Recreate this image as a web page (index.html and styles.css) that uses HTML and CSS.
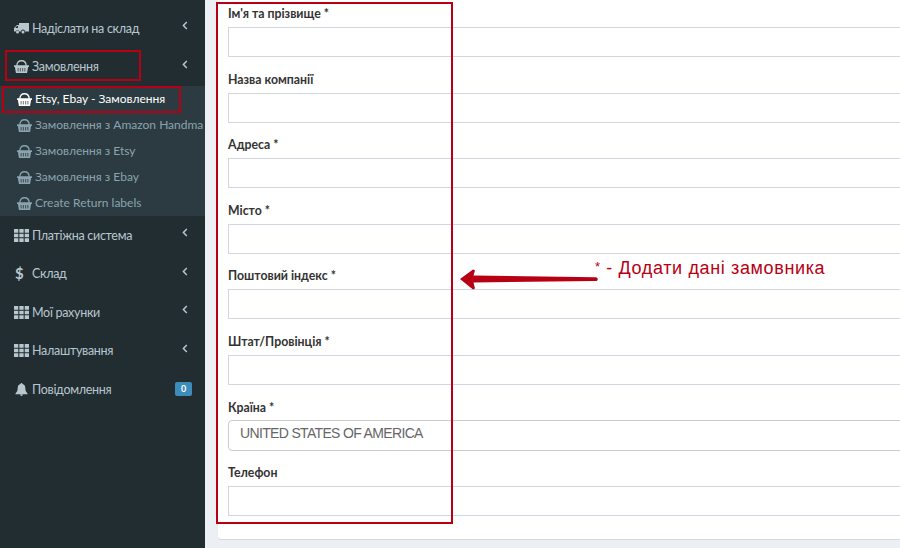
FILE: index.html
```html
<!DOCTYPE html>
<html lang="uk">
<head>
<meta charset="utf-8">
<title>Замовлення</title>
<link rel="stylesheet" href="styles.css">
</head>
<body>
<svg class="defs" width="0" height="0" aria-hidden="true">
  <symbol id="basket" viewBox="0 0 16 14">
    <path d="M3 6.5 C3 2.500 5 .8 8 .8 C11 .8 13 2.500 13 6.500" fill="none" stroke="currentColor" stroke-width="1.400"/>
    <path fill="currentColor" d="M0 5.600h16v2h-.9L14 14H2L.9 7.600H0z"/>
    <path fill="#000" fill-opacity=".55" d="M3.800 8.500h1.100v4H3.800zM6.200 8.500h1.100v4H6.200zM8.700 8.500h1.100v4H8.700zM11.100 8.500h1.100v4h-1.100z"/>
  </symbol>
  <symbol id="th" viewBox="0 0 14 12">
    <path fill="currentColor" d="M0 0h4v3.400H0zM5 0h4v3.400H5zM10 0h4v3.400h-4zM0 4.300h4v3.400H0zM5 4.300h4v3.400H5zM10 4.300h4v3.400h-4zM0 8.600h4V12H0zM5 8.600h4V12H5zM10 8.600h4V12h-4z"/>
  </symbol>
  <symbol id="truck" viewBox="0 0 15 11">
    <path fill="currentColor" d="M5 0h10v8.600h-4a2 2 0 0 0-4 0H5.400a2 2 0 0 0-3.800 0H0V5l3-3h2zM1.300 5h2.700V3H3z"/>
    <circle cx="3.500" cy="9" r="1.500" fill="currentColor"/><circle cx="9" cy="9" r="1.500" fill="currentColor"/>
  </symbol>
  <symbol id="bell" viewBox="0 0 13 14">
    <path fill="currentColor" d="M6.500 0a1 1 0 0 1 1 1.100C9.500 1.500 10.600 3 10.600 5.500c0 3 .8 4.300 2.400 5.700v.8H0v-.8c1.600-1.400 2.400-2.700 2.400-5.700C2.400 3 3.500 1.500 5.500 1.100a1 1 0 0 1 1-1.100zM5 12.500h3A1.500 1.500 0 0 1 5 12.500z"/>
  </symbol>
  <symbol id="chev" viewBox="0 0 6 9">
    <path d="M4.800 1 1.400 4.500l3.400 3.500" fill="none" stroke="currentColor" stroke-width="1.500"/>
  </symbol>
</svg>

<div class="page">
  <aside class="sidebar">
    <ul class="menu">
      <li class="item"><svg class="ico truck"><use href="#truck"/></svg><span class="name">Надіслати на склад</span><svg class="chev"><use href="#chev"/></svg></li>
      <li class="item"><svg class="ico basket"><use href="#basket"/></svg><span class="name">Замовлення</span><svg class="chev"><use href="#chev"/></svg></li>
      <li>
        <ul class="submenu">
          <li class="sub active"><svg class="ico basket"><use href="#basket"/></svg><span class="subname">Etsy, Ebay - Замовлення</span></li>
          <li class="sub"><svg class="ico basket"><use href="#basket"/></svg><span class="subname">Замовлення з Amazon Handma</span></li>
          <li class="sub"><svg class="ico basket"><use href="#basket"/></svg><span class="subname">Замовлення з Etsy</span></li>
          <li class="sub"><svg class="ico basket"><use href="#basket"/></svg><span class="subname">Замовлення з Ebay</span></li>
          <li class="sub"><svg class="ico basket"><use href="#basket"/></svg><span class="subname">Create Return labels</span></li>
        </ul>
      </li>
      <li class="item"><svg class="ico th"><use href="#th"/></svg><span class="name">Платіжна система</span><svg class="chev"><use href="#chev"/></svg></li>
      <li class="item"><span class="ico dollar">$</span><span class="name">Склад</span><svg class="chev"><use href="#chev"/></svg></li>
      <li class="item"><svg class="ico th"><use href="#th"/></svg><span class="name">Мої рахунки</span><svg class="chev"><use href="#chev"/></svg></li>
      <li class="item"><svg class="ico th"><use href="#th"/></svg><span class="name">Налаштування</span><svg class="chev"><use href="#chev"/></svg></li>
      <li class="item"><svg class="ico bell"><use href="#bell"/></svg><span class="name">Повідомлення</span><span class="badge">0</span></li>
    </ul>
  </aside>

  <main class="content">
    <form class="box">
      <div class="field"><label>Ім'я та прізвище *</label><input class="input" type="text"></div>
      <div class="field"><label>Назва компанії</label><input class="input" type="text"></div>
      <div class="field"><label>Адреса *</label><input class="input" type="text"></div>
      <div class="field"><label>Місто *</label><input class="input" type="text"></div>
      <div class="field"><label>Поштовий індекс *</label><input class="input" type="text"></div>
      <div class="field"><label>Штат/Провінція *</label><input class="input" type="text"></div>
      <div class="field"><label>Країна *</label><div class="select">UNITED STATES OF AMERICA</div></div>
      <div class="field"><label>Телефон</label><input class="input" type="text"></div>
    </form>
  </main>
</div>

<div class="mark mark-orders"></div>
<div class="mark mark-etsy"></div>
<div class="mark mark-form"></div>
<svg class="arrow" width="140" height="24" viewBox="0 0 140 24"><path fill="#b80014" d="M0 11 13 1.500l2 .8-1.500 5.200 122 1.700c3 .3 3 3.600 0 3.800L13.500 14.500 15 20.500l-2 1z"/></svg>
<div class="note"><sup class="star">*</sup> - Додати дані замовника</div>
</body>
</html>
```
FILE: styles.css
```css
* { box-sizing: border-box; }
html, body { margin: 0; padding: 0; height: 100%; overflow: hidden; }
body { font-family: "Lato", "Open Sans", sans-serif; background: #ecf0f5; position: relative; }
.defs { position: absolute; }
ul { list-style: none; margin: 0; padding: 0; }

.page { display: flex; height: 548px; width: 900px; overflow: hidden; }

.sidebar { width: 205px; flex: none; background: #222d32; padding-top: 9px; overflow: hidden; }
.item { height: 38.500px; display: flex; align-items: center; padding-left: 14px; color: #b8c7ce; font-size: 12.500px; letter-spacing: -.3px; position: relative; }
.name { white-space: nowrap; }
.ico { flex: none; }
.item .ico { width: 15px; height: 13px; margin-right: 3px; }
.item .dollar { font-size: 15px; font-weight: 700; line-height: 13px; text-align: left; padding-left: 1px; }
.chev { position: absolute; left: 182px; top: 12px; width: 6px; height: 9px; color: #b8c7ce; }
.badge { position: absolute; left: 175px; top: 12px; width: 17px; height: 14px; border-radius: 2px; background: #3c8dbc; color: #fff; font-size: 9px; font-weight: 700; line-height: 14px; text-align: center; letter-spacing: 0; }

.submenu { background: #2c3b41; height: 130px; margin-bottom: 0; }
.sub { height: 26px; display: flex; align-items: center; padding-left: 17px; color: #8aa4af; font-size: 12px; white-space: nowrap; }
.subname { line-height: 26px; height: 26px; }
.sub .ico { width: 15px; height: 13px; margin-right: 3px; }
.sub.active { color: #fff; }

.content { flex: 1; min-width: 0; padding: 0 0 9px 13px; }
.box { height: 539px; background: #fff; border-radius: 0 0 0 3px; box-shadow: 0 1px 1px rgba(0,0,0,.1); padding: 3px 0 0 10px; display: flex; flex-direction: column; }
.field { height: 65.600px; flex: none; display: flex; flex-direction: column; }
label { height: 20px; line-height: 21px; margin-bottom: 4px; font-size: 12.300px; font-weight: 700; color: #333; }
.input { height: 30px; width: calc(100% + 10px); flex: none; border: 1px solid #d2d6de; background: #fff; padding: 0; outline: none; display: block; }
.select { height: 31px; width: calc(100% + 10px); flex: none; margin-top: -1px; border: 1px solid #ccc; border-radius: 4px; padding-left: 11px; font-family: "Liberation Sans", Arial, sans-serif; font-size: 14px; letter-spacing: -.66px; line-height: 25px; color: #666; }

.mark { position: absolute; border: 2px solid #b80014; pointer-events: none; }
.mark-orders { left: 5px; top: 50px; width: 136px; height: 31px; }
.mark-etsy { left: 2px; top: 86px; width: 179px; height: 27px; }
.mark-form { left: 216px; top: 2px; width: 237px; height: 522px; }

.arrow { position: absolute; left: 460px; top: 268px; }
.note { position: absolute; left: 595px; top: 257px; font-family: "Liberation Sans", Arial, sans-serif; font-size: 18px; line-height: 22px; letter-spacing: .63px; color: #b80014; white-space: nowrap; }
.star { font-size: 13px; vertical-align: 3px; line-height: 0; }
```
